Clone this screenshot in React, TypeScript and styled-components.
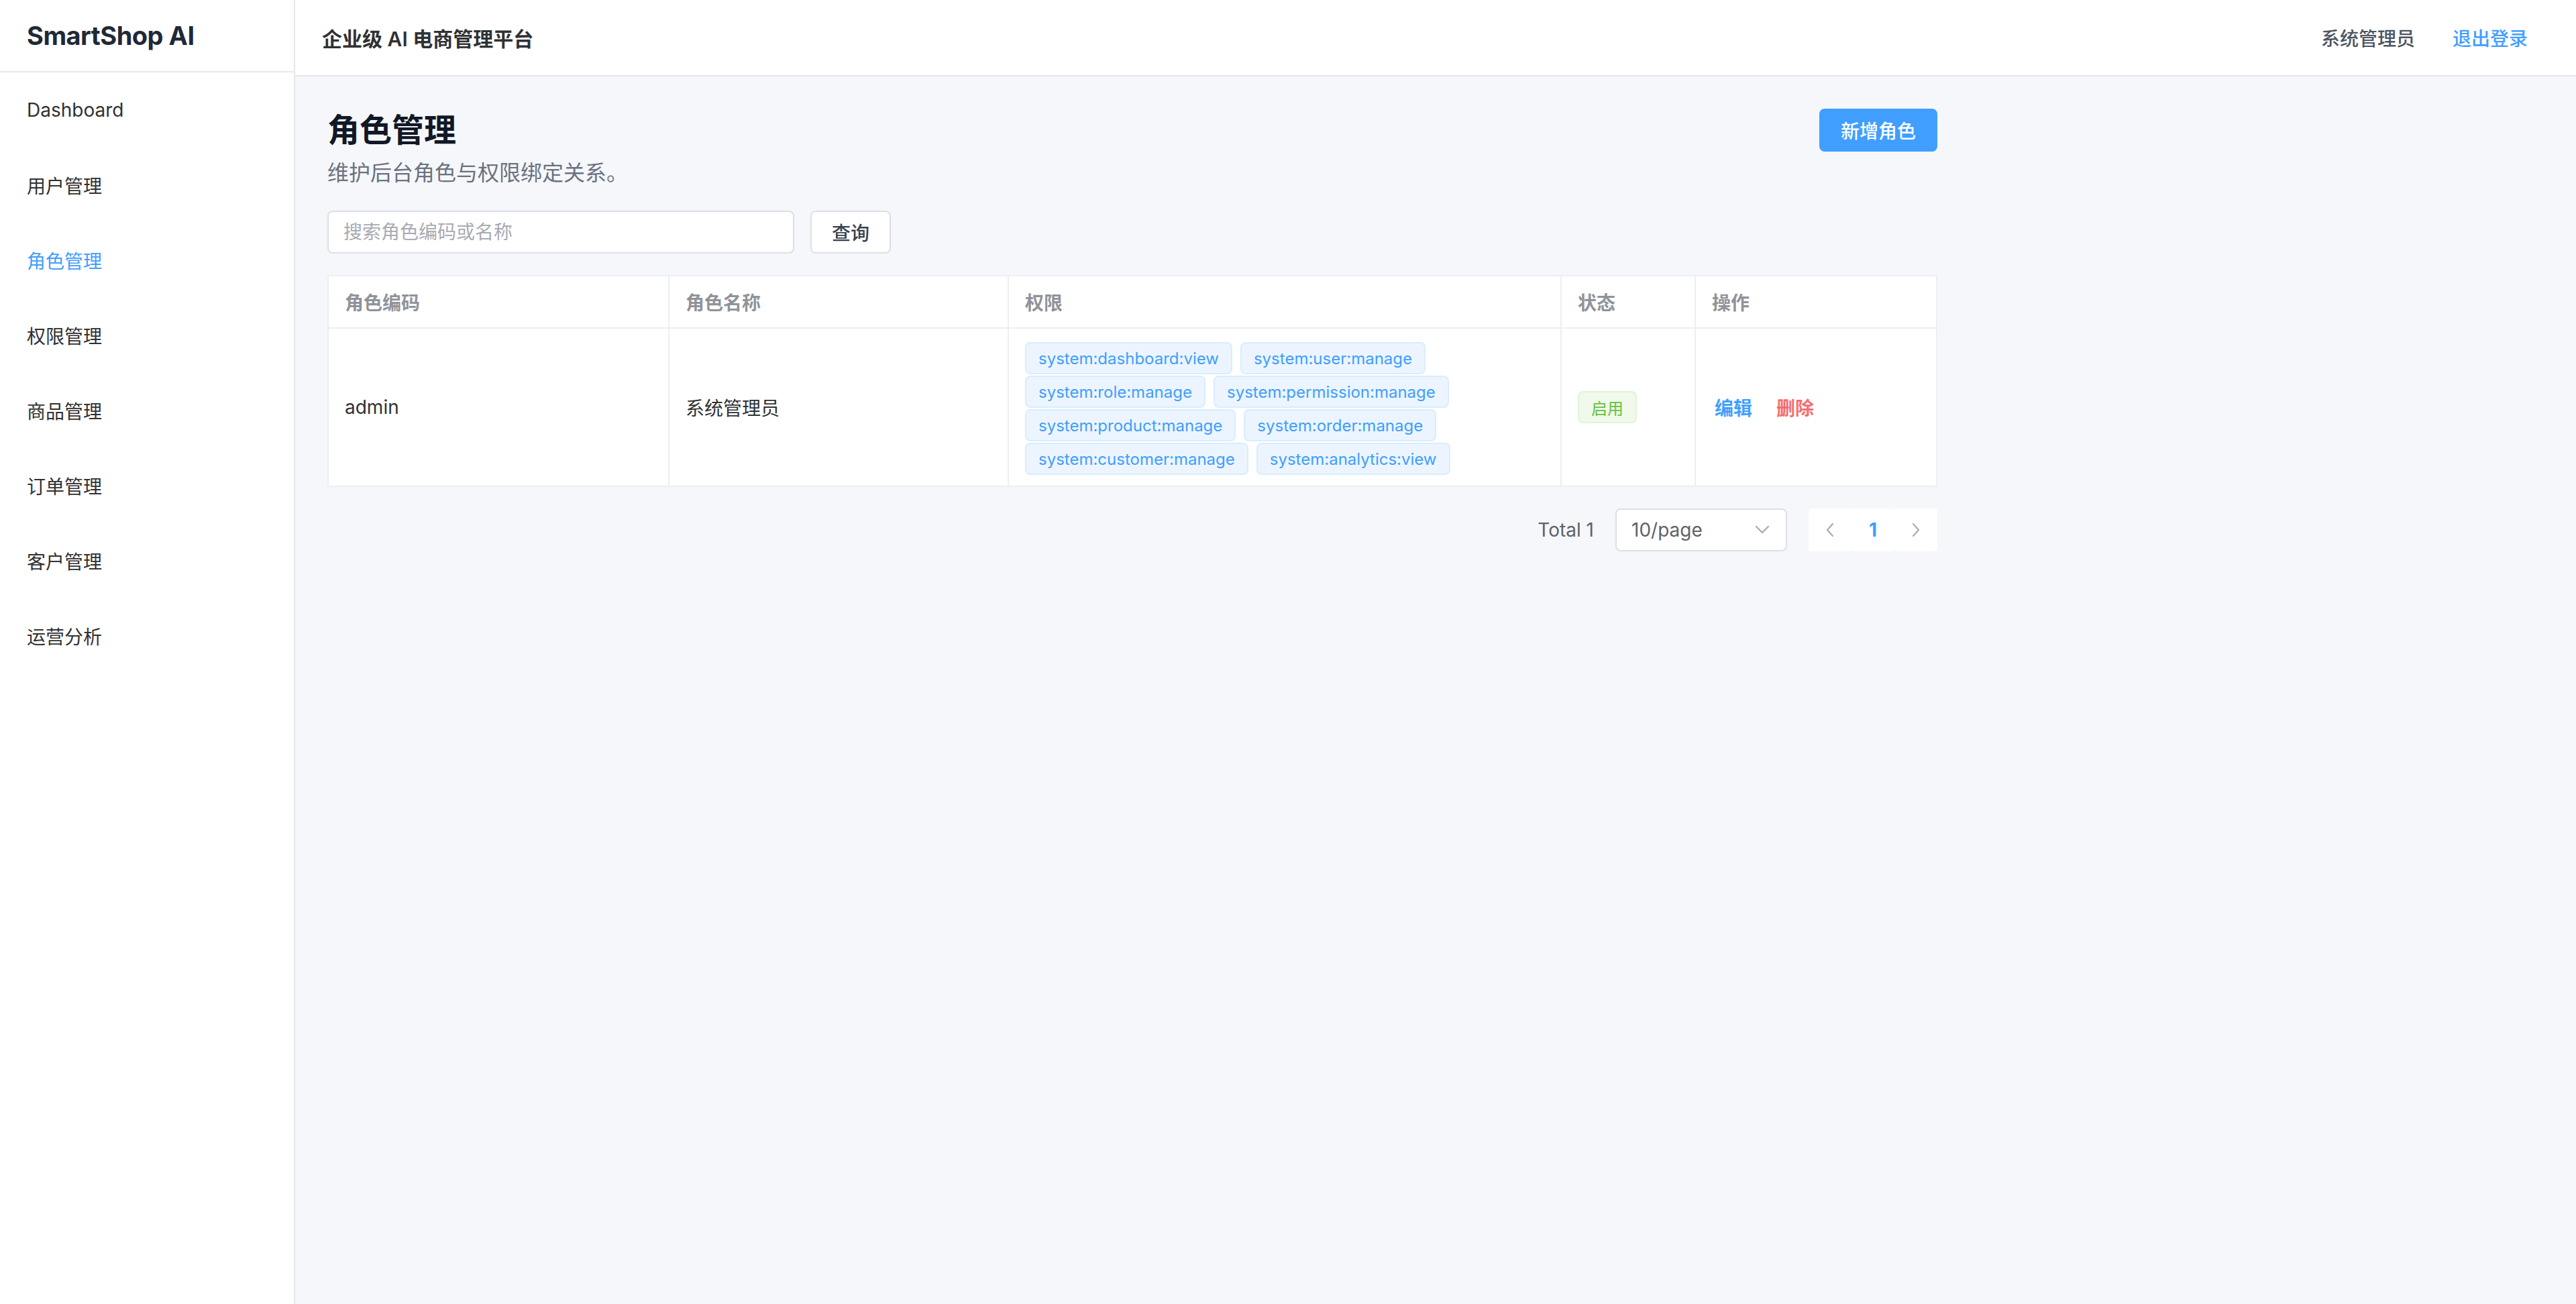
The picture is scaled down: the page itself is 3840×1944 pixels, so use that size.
import React from 'react';
import styled, { createGlobalStyle } from 'styled-components';

// Layout is drawn at 2x (a 1920px wide admin page rendered on a 3840px canvas).

const GlobalStyle = createGlobalStyle`
  html, body {
    margin: 0;
    padding: 0;
  }
  body {
    background: #f5f7fa;
    font-family: Inter, "Noto Sans CJK SC", "Liberation Sans", sans-serif;
    color: #303133;
    -webkit-font-smoothing: antialiased;
  }
  *, *::before, *::after {
    box-sizing: border-box;
  }
`;

const Shell = styled.div`
  display: flex;
  min-height: 100vh;
`;

const Sidebar = styled.aside`
  width: 440px;
  flex-shrink: 0;
  background: #ffffff;
  border-right: 2px solid #e5e7eb;
`;

const Brand = styled.div`
  height: 108px;
  display: flex;
  align-items: center;
  padding: 0 40px;
  border-bottom: 2px solid #e8eaee;
  font-size: 38px;
  font-weight: 700;
  letter-spacing: -0.5px;
  color: #1f2937;
`;

const Menu = styled.nav`
  display: flex;
  flex-direction: column;
`;

const MenuItem = styled.a<{ $active?: boolean }>`
  height: 112px;
  display: flex;
  align-items: center;
  padding: 0 40px;
  font-size: 28px;
  color: ${p => (p.$active ? '#409eff' : '#303133')};
  text-decoration: none;
  cursor: pointer;
`;

const Main = styled.div`
  flex: 1;
  min-width: 0;
  display: flex;
  flex-direction: column;
`;

const Topbar = styled.header`
  height: 114px;
  flex-shrink: 0;
  display: flex;
  align-items: center;
  justify-content: space-between;
  padding: 0 40px;
  background: #ffffff;
  border-bottom: 2px solid #e5e7eb;
`;

const PlatformTitle = styled.div`
  font-size: 30px;
  font-weight: 600;
  color: #303133;
`;

const UserArea = styled.div`
  display: flex;
  align-items: center;
  gap: 24px;
`;

const UserName = styled.span`
  font-size: 28px;
  font-weight: 500;
  color: #4b5563;
`;

const TextButton = styled.button`
  height: 64px;
  padding: 0 30px;
  border: 2px solid transparent;
  background: transparent;
  font-family: inherit;
  font-size: 28px;
  font-weight: 500;
  color: #409eff;
  cursor: pointer;
`;

const Content = styled.main`
  padding: 48px;
`;

const Container = styled.div`
  max-width: 2400px;
`;

const PageHead = styled.div`
  display: flex;
  align-items: flex-start;
  justify-content: space-between;
`;

const PageTitle = styled.h1`
  margin: 0;
  font-size: 48px;
  line-height: 64px;
  font-weight: 700;
  color: #111827;
`;

const PageDesc = styled.p`
  margin: 8px 0 0;
  font-size: 32px;
  line-height: 48px;
  color: #6b7280;
`;

const Button = styled.button<{ $primary?: boolean }>`
  height: 64px;
  padding: 0 30px;
  border-radius: 8px;
  border: 2px solid ${p => (p.$primary ? '#409eff' : '#dcdfe6')};
  background: ${p => (p.$primary ? '#409eff' : '#ffffff')};
  color: ${p => (p.$primary ? '#ffffff' : '#374151')};
  font-family: inherit;
  font-size: 28px;
  font-weight: 500;
  cursor: pointer;
`;

const Toolbar = styled.div`
  display: flex;
  align-items: center;
  gap: 24px;
  margin-top: 32px;
`;

const SearchInput = styled.input`
  width: 696px;
  height: 64px;
  padding: 0 22px;
  border: 2px solid #dcdfe6;
  border-radius: 8px;
  background: #ffffff;
  font-family: inherit;
  font-size: 28px;
  color: #303133;
  outline: none;

  &::placeholder {
    color: #a8abb2;
  }
`;

const columns = '508px 506px 1fr 200px 358px';

const Table = styled.div`
  margin-top: 32px;
  background: #ffffff;
  border: 2px solid #ebeef5;
  border-bottom: none;
`;

const TableRow = styled.div`
  display: grid;
  grid-template-columns: ${columns};
`;

const HeadCell = styled.div`
  display: flex;
  align-items: center;
  height: 78px;
  padding: 0 24px;
  font-size: 28px;
  font-weight: 600;
  color: #909399;
  border-bottom: 2px solid #ebeef5;
  border-right: 2px solid #ebeef5;

  &:last-child {
    border-right: none;
  }
`;

const Cell = styled.div<{ $wrap?: boolean }>`
  display: flex;
  align-items: center;
  flex-wrap: ${p => (p.$wrap ? 'wrap' : 'nowrap')};
  align-content: center;
  gap: ${p => (p.$wrap ? '2px 12px' : '0')};
  padding: ${p => (p.$wrap ? '20px 24px 16px' : '0 24px')};
  font-size: 28px;
  color: #303133;
  border-bottom: 2px solid #ebeef5;
  border-right: 2px solid #ebeef5;

  &:last-child {
    border-right: none;
  }
`;

const Tag = styled.span<{ $tone?: 'primary' | 'success' }>`
  display: inline-flex;
  align-items: center;
  height: 48px;
  padding: 0 18px;
  border-radius: 8px;
  font-size: 24px;
  white-space: nowrap;
  border: 2px solid ${p => (p.$tone === 'success' ? '#e1f3d8' : '#d9ecff')};
  background: ${p => (p.$tone === 'success' ? '#f0f9eb' : '#ecf5ff')};
  color: ${p => (p.$tone === 'success' ? '#67c23a' : '#409eff')};
`;

const LinkButton = styled.button<{ $danger?: boolean }>`
  padding: 4px;
  border: none;
  background: transparent;
  font-family: inherit;
  font-size: 28px;
  font-weight: 600;
  color: ${p => (p.$danger ? '#f56c6c' : '#409eff')};
  cursor: pointer;

  & + & {
    margin-left: 28px;
  }
`;

const Pagination = styled.div`
  display: flex;
  align-items: center;
  justify-content: flex-end;
  margin-top: 32px;
  font-size: 28px;
  color: #606266;
`;

const Total = styled.span`
  margin-right: 32px;
`;

const SizeSelect = styled.div`
  width: 256px;
  height: 64px;
  display: flex;
  align-items: center;
  justify-content: space-between;
  padding: 0 24px 0 22px;
  margin-right: 32px;
  background: #ffffff;
  border: 2px solid #dcdfe6;
  border-radius: 8px;
  color: #606266;
`;

const Pager = styled.div`
  display: flex;
`;

const PagerButton = styled.button<{ $current?: boolean }>`
  width: 64px;
  height: 64px;
  display: flex;
  align-items: center;
  justify-content: center;
  border: none;
  border-radius: 4px;
  background: #ffffff;
  font-family: inherit;
  font-size: 28px;
  font-weight: 700;
  color: ${p => (p.$current ? '#409eff' : '#a8abb2')};
  padding: 0;
`;

const ChevronDown = () => (
  <svg width="22" height="14" viewBox="0 0 22 14" fill="none">
    <path d="M2 2l9 9 9-9" stroke="#a8abb2" strokeWidth="2.4" strokeLinecap="round" strokeLinejoin="round" />
  </svg>
);

const ChevronSide = ({ dir }: { dir: 'left' | 'right' }) => (
  <svg width="14" height="22" viewBox="0 0 14 22" fill="none">
    <path
      d={dir === 'left' ? 'M11 2L3 11l8 9' : 'M3 2l8 9-8 9'}
      stroke="#a8abb2"
      strokeWidth="2.2"
      strokeLinecap="round"
      strokeLinejoin="round"
    />
  </svg>
);

const menu = ['Dashboard', '用户管理', '角色管理', '权限管理', '商品管理', '订单管理', '客户管理', '运营分析'];

const permissions = [
  'system:dashboard:view',
  'system:user:manage',
  'system:role:manage',
  'system:permission:manage',
  'system:product:manage',
  'system:order:manage',
  'system:customer:manage',
  'system:analytics:view',
];

export default function App() {
  return (
    <>
      <GlobalStyle />
      <Shell>
        <Sidebar>
          <Brand>SmartShop AI</Brand>
          <Menu>
            {menu.map(item => (
              <MenuItem key={item} $active={item === '角色管理'}>
                {item}
              </MenuItem>
            ))}
          </Menu>
        </Sidebar>

        <Main>
          <Topbar>
            <PlatformTitle>企业级 AI 电商管理平台</PlatformTitle>
            <UserArea>
              <UserName>系统管理员</UserName>
              <TextButton>退出登录</TextButton>
            </UserArea>
          </Topbar>

          <Content>
            <Container>
              <PageHead>
                <div>
                  <PageTitle>角色管理</PageTitle>
                  <PageDesc>维护后台角色与权限绑定关系。</PageDesc>
                </div>
                <Button $primary>新增角色</Button>
              </PageHead>

              <Toolbar>
                <SearchInput placeholder="搜索角色编码或名称" />
                <Button>查询</Button>
              </Toolbar>

              <Table>
                <TableRow>
                  <HeadCell>角色编码</HeadCell>
                  <HeadCell>角色名称</HeadCell>
                  <HeadCell>权限</HeadCell>
                  <HeadCell>状态</HeadCell>
                  <HeadCell>操作</HeadCell>
                </TableRow>
                <TableRow>
                  <Cell>admin</Cell>
                  <Cell>系统管理员</Cell>
                  <Cell $wrap>
                    {permissions.map(code => (
                      <Tag key={code}>{code}</Tag>
                    ))}
                  </Cell>
                  <Cell>
                    <Tag $tone="success">启用</Tag>
                  </Cell>
                  <Cell>
                    <LinkButton>编辑</LinkButton>
                    <LinkButton $danger>删除</LinkButton>
                  </Cell>
                </TableRow>
              </Table>

              <Pagination>
                <Total>Total 1</Total>
                <SizeSelect>
                  <span>10/page</span>
                  <ChevronDown />
                </SizeSelect>
                <Pager>
                  <PagerButton>
                    <ChevronSide dir="left" />
                  </PagerButton>
                  <PagerButton $current>1</PagerButton>
                  <PagerButton>
                    <ChevronSide dir="right" />
                  </PagerButton>
                </Pager>
              </Pagination>
            </Container>
          </Content>
        </Main>
      </Shell>
    </>
  );
}
